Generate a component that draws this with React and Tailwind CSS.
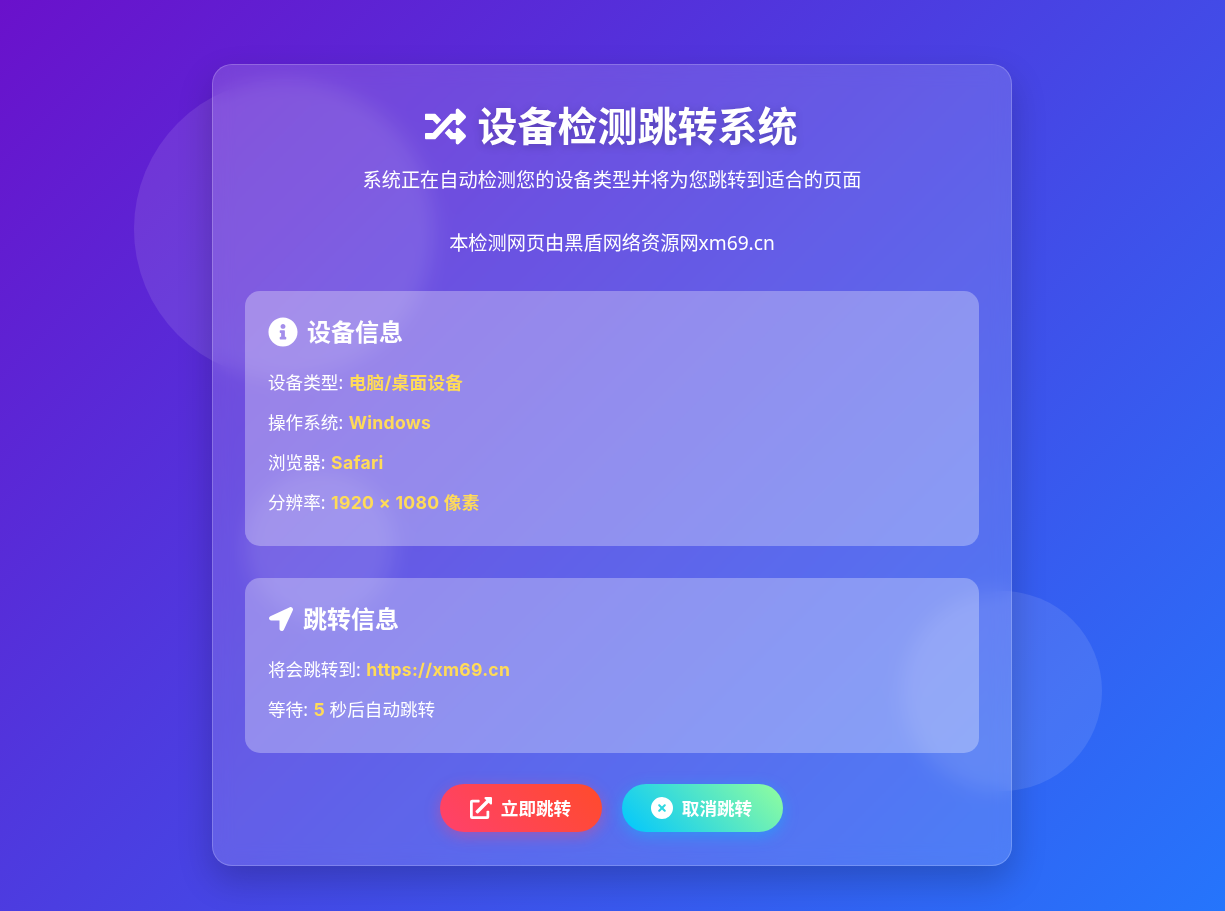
import React from "react";
import { FaRandom, FaInfoCircle, FaLocationArrow, FaExternalLinkAlt } from "react-icons/fa";
import { FaCircleXmark } from "react-icons/fa6";

const font = "[font-family:'Noto_Sans','Noto_Sans_CJK_SC',sans-serif]";

function Row({ label, value, after }) {
  return (
    <p className="text-[17.6px] leading-[28.16px] text-white mb-[10.7px]">
      {label}: <span className="ml-[1px] tracking-[0.3px] font-bold text-[#ffdb58] [font-family:'Inter','Noto_Sans_CJK_SC',sans-serif]">{value}</span>
      {after}
    </p>
  );
}

export default function App() {
  return (
    <div className={`relative overflow-hidden w-full min-h-[911px] bg-[linear-gradient(135deg,#6a11cb_0%,#2575fc_100%)] flex items-start justify-center pt-[64px] ${font}`}>
      <div className="absolute left-[134px] top-[79px] w-[300px] h-[300px] rounded-full bg-white/10" />
      <div className="absolute left-[902px] top-[591px] w-[200px] h-[200px] rounded-full bg-white/10" />
      <div className="absolute left-[245px] top-[470px] w-[150px] h-[150px] rounded-full bg-white/10" />

      <main className="relative mr-[1px] w-[800px] h-[802px] rounded-[20px] border border-white/20 bg-white/15 backdrop-blur-[10px] shadow-[0_15px_35px_rgba(0,0,0,0.2)] p-8 flex flex-col">
        <header className="flex flex-col items-center text-white">
          <h1 className="flex items-center gap-[12px] pr-[2px] text-[40px] leading-[52px] font-bold mt-[3px] [text-shadow:0_2px_10px_rgba(0,0,0,0.2)]">
            <FaRandom className="w-[41px] h-[41px]" />
            设备检测跳转系统
          </h1>
          <p className="text-[19.2px] leading-[28px] mt-[14px]">系统正在自动检测您的设备类型并将为您跳转到适合的页面</p>
          <p className="text-[19.2px] leading-[28px] mt-[35px]">本检测网页由黑盾网络资源网xm69.cn</p>
        </header>

        <section className="mt-[34px] h-[255px] rounded-[15px] bg-white/30 px-[23px] pt-[23px]">
          <h2 className="flex items-center gap-[9px] text-[24px] leading-[36px] font-bold text-white mb-[18px]">
            <FaInfoCircle className="w-[30px] h-[30px]" />
            设备信息
          </h2>
          <Row label="设备类型" value="电脑/桌面设备" />
          <Row label="操作系统" value="Windows" />
          <Row label="浏览器" value="Safari" />
          <Row label="分辨率" value="1920 × 1080 像素" />
        </section>

        <section className="mt-[32px] h-[175px] rounded-[15px] bg-white/30 px-[23px] pt-[23px]">
          <h2 className="flex items-center gap-[10px] text-[24px] leading-[36px] font-bold text-white mb-[18px]">
            <FaLocationArrow className="ml-[1px] w-[24px] h-[24px]" />
            跳转信息
          </h2>
          <Row label="将会跳转到" value="https://xm69.cn" />
          <Row label="等待" value="5" after=" 秒后自动跳转" />
        </section>

        <div className="mt-[31px] pr-[1px] flex justify-center gap-[20px]">
          <button className="w-[162px] h-[48px] pr-[1px] rounded-full bg-[linear-gradient(45deg,#ff416c,#ff4b2b)] shadow-[0_4px_15px_rgba(255,65,108,0.4)] flex items-center justify-center gap-[9px] text-white text-[17.6px] font-bold">
            <FaExternalLinkAlt className="w-[22px] h-[22px]" />
            立即跳转
          </button>
          <button className="w-[161px] h-[48px] pr-[2px] rounded-full bg-[linear-gradient(45deg,#00c6ff,#92fe9d)] shadow-[0_4px_15px_rgba(0,198,255,0.4)] flex items-center justify-center gap-[9px] text-white text-[17.6px] font-bold">
            <FaCircleXmark className="w-[22px] h-[22px]" />
            取消跳转
          </button>
        </div>
      </main>
    </div>
  );
}
